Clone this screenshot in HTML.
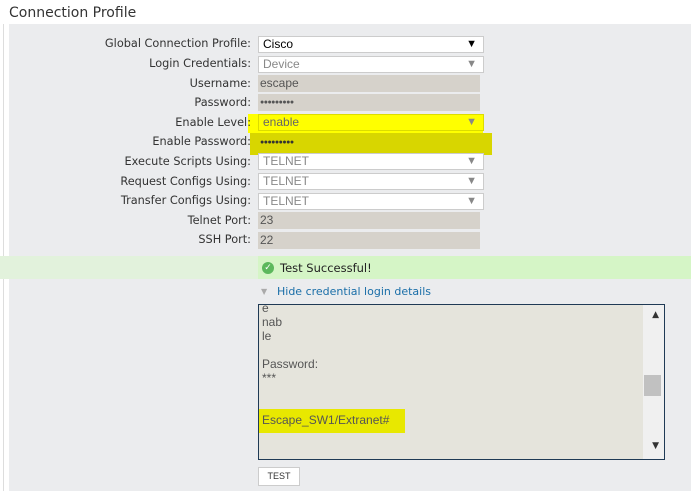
<!DOCTYPE html><html><head><style>
body{margin:0;width:691px;height:491px;background:#fff;font-family:"DejaVu Sans","Liberation Sans",sans-serif;position:relative;overflow:hidden}
.a{position:absolute}
.t{font-size:14px;color:#333;left:9px;top:5px}
.panel{left:9px;top:24px;width:682px;height:467px;background:#ebecee}
.vl{left:3px;top:24px;width:1px;height:467px;background:#ddd}
.lbl{font-size:11.3px;color:#333;right:440px;text-align:right;white-space:nowrap}
.sel{left:258px;height:15px;background:#fff;border:1px solid #ccc;font:12px "Liberation Sans",sans-serif;color:#888;line-height:15px;padding-left:4px;box-sizing:content-box;width:220px}
.sel:after{content:"▼";position:absolute;right:6px;top:0;font-size:11px;color:#888}
.blk:after{color:#000}
.inp{left:258px;width:222px;height:17px;background:#d6d2cb;font:12px "Liberation Sans",sans-serif;color:#555;line-height:17px;padding-left:2px;box-sizing:border-box}
.dots{font-size:7px;letter-spacing:-0.5px}
</style></head><body>
<div class="a t">Connection Profile</div>
<div class="a vl"></div>
<div class="a panel"></div>
<div class="a" style="left:248px;top:114px;width:235px;height:19px;background:#ffff00"></div>
<div class="a" style="left:250px;top:133px;width:242px;height:22px;background:#d8d600"></div>
<div class="a lbl" style="top:37px">Global Connection Profile:</div>
<div class="a sel blk" style="top:36px;color:#000">Cisco</div>
<div class="a lbl" style="top:57px">Login Credentials:</div>
<div class="a sel" style="top:56px">Device</div>
<div class="a lbl" style="top:77px">Username:</div>
<div class="a inp" style="top:75px">escape</div>
<div class="a lbl" style="top:96px">Password:</div>
<div class="a inp dots" style="top:94px">●●●●●●●●●</div>
<div class="a lbl" style="top:116px">Enable Level:</div>
<div class="a sel" style="top:114px;background:#ffff00;border-color:#dcdc00;color:#666">enable</div>
<div class="a lbl" style="top:135px">Enable Password:</div>
<div class="a inp dots" style="top:134px;background:transparent;color:#333">●●●●●●●●●</div>
<div class="a lbl" style="top:155px">Execute Scripts Using:</div>
<div class="a sel" style="top:153px">TELNET</div>
<div class="a lbl" style="top:175px">Request Configs Using:</div>
<div class="a sel" style="top:173px">TELNET</div>
<div class="a lbl" style="top:194px">Transfer Configs Using:</div>
<div class="a sel" style="top:193px">TELNET</div>
<div class="a lbl" style="top:214px">Telnet Port:</div>
<div class="a inp" style="top:212px">23</div>
<div class="a lbl" style="top:233px">SSH Port:</div>
<div class="a inp" style="top:232px">22</div>
<div class="a" style="left:0;top:256px;width:691px;height:23px;background:#d5f5c6"></div>
<div class="a" style="left:0;top:256px;width:258px;height:23px;background:#e2f2dc"></div>
<div class="a" style="left:262px;top:262px;width:12px;height:12px;border-radius:50%;background:#5cb85c;color:#fff;font-size:9px;line-height:12px;text-align:center">✓</div>
<div class="a" style="left:280px;top:261px;font-size:11.5px;color:#222">Test Successful!</div>
<div class="a" style="left:261px;top:287px;font-size:8px;color:#aaa">▼</div>
<div class="a" style="left:277px;top:285px;font-size:11px;color:#1a6ea8">Hide credential login details</div>
<div class="a" style="left:258px;top:304px;width:405px;height:154px;border:1px solid #1f3a55;background:#e5e4dc;overflow:hidden">
<div class="a" style="left:-8px;top:104px;width:154px;height:24px;background:#e8e800"></div>
<div class="a" style="left:3px;top:-4px;font:12px/14px 'Liberation Sans',sans-serif;color:#555">e<br>nab<br>le<br><br>Password:<br>***<br><br><br>Escape_SW1/Extranet#</div>
<div class="a" style="right:0;top:0;width:21px;height:154px;background:#f0f0f0"></div>
<div class="a" style="right:5px;top:5px;font-size:9px;color:#333">▲</div>
<div class="a" style="right:3px;top:70px;width:17px;height:21px;background:#c1c1c1"></div>
<div class="a" style="right:5px;top:136px;font-size:9px;color:#333">▼</div>
</div>
<div class="a" style="left:258px;top:467px;width:40px;height:17px;background:#fff;border:1px solid #ccc;font:9px/17px 'Liberation Sans',sans-serif;text-align:center;color:#333">TEST</div>
</body></html>
